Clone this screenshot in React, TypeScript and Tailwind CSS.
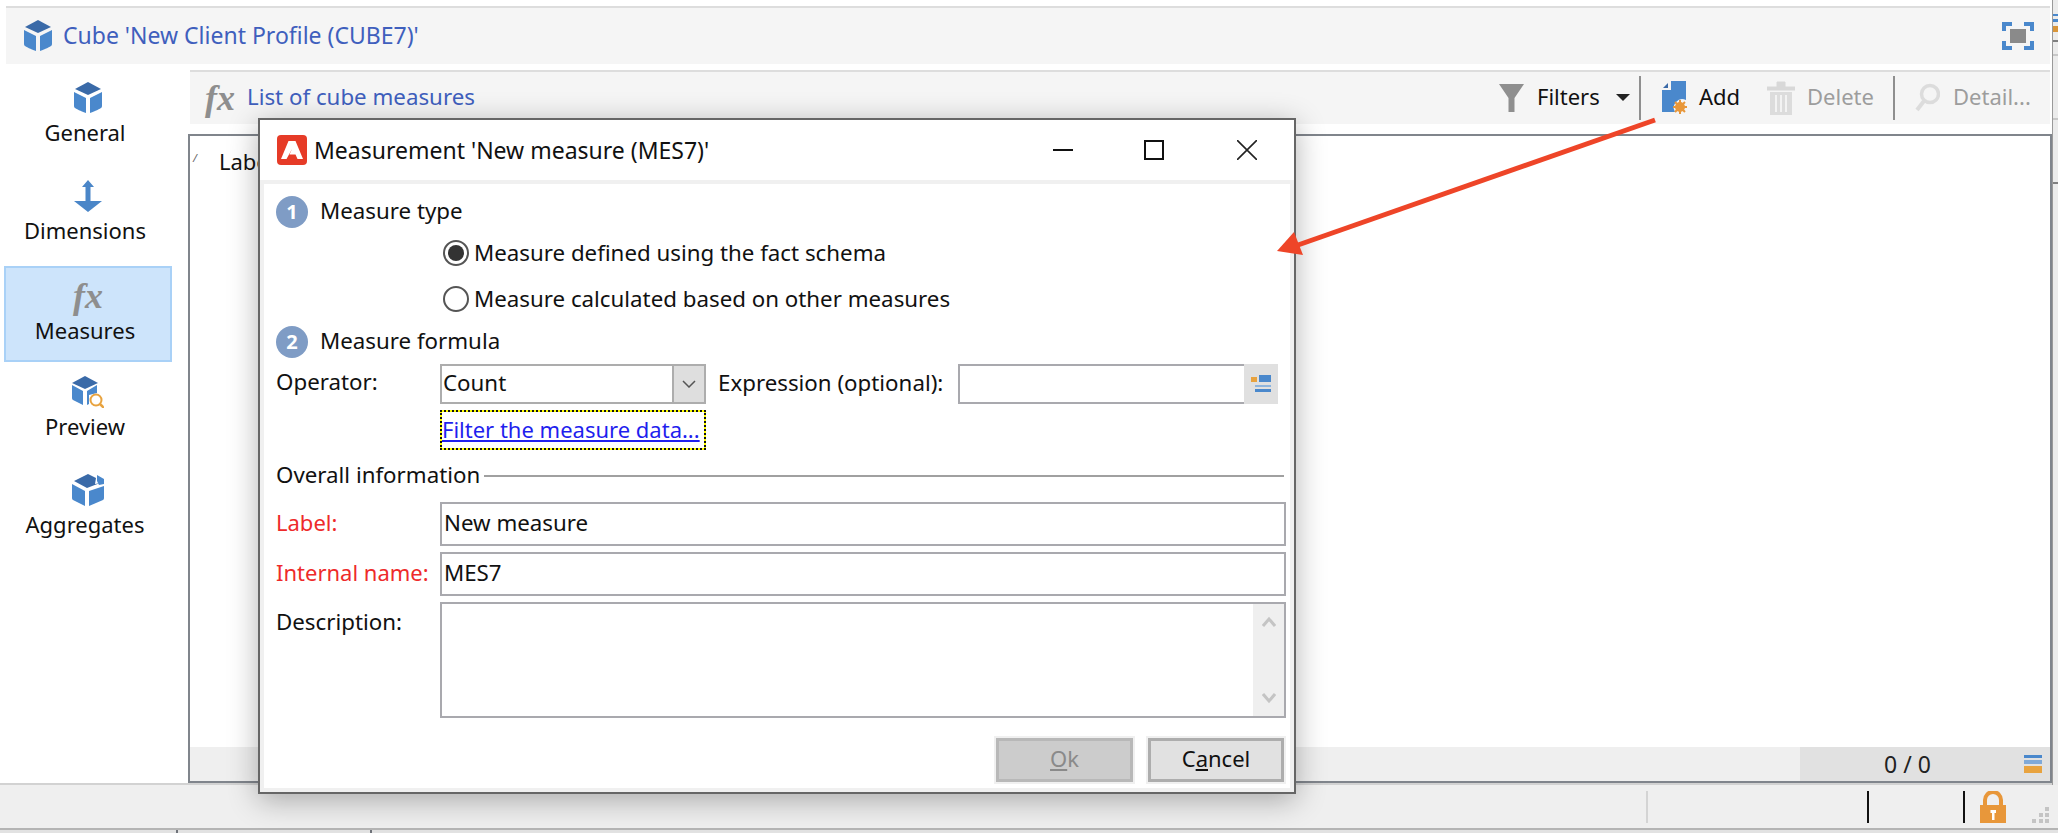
import React from 'react';

const ui = "font-['Noto_Sans','Open_Sans',sans-serif]";

const Cube = ({ className = '' }: { className?: string }) => (
  <svg viewBox="0 0 28 32" className={className}>
    <path d="M14 0 L27 7 L14 13 L1 7 Z" fill="#3a6aa8" />
    <path d="M0 10 L12 16 L12 31 C6 29 3 27 1 26 Q0 25.500 0 24 Z" fill="#4a88cc" />
    <path d="M28 10 L16 16 L16 31 C22 29 25 27 27 26 Q28 25.500 28 24 Z" fill="#4a88cc" />
  </svg>
);

const FxIcon = ({ className = '' }: { className?: string }) => (
  <span className={`font-['Liberation_Serif',serif] italic font-bold text-[#8e8e8e] leading-none ${className}`}>fx</span>
);

const DimensionsIcon = () => (
  <svg viewBox="0 0 28 32" className="w-[28px] h-[32px]">
    <path d="M14 0 L20 7 L16.500 7 L16.500 21 L28 21 L14 32 L0 21 L11.500 21 L11.500 7 L8 7 Z" fill="#4a86c8" />
  </svg>
);

const PreviewIcon = () => (
  <svg viewBox="0 0 32 32" className="w-[32px] h-[32px]">
    <path d="M13 0 L26 7 L13 13 L0 7 Z" fill="#3a6aa8" />
    <path d="M0 9 L11 15 L11 29 L1 24 Q0 23.500 0 22 Z" fill="#4a88cc" />
    <path d="M25 9 L15 15 L15 29 L17 28 L17 19 L25 17 Z" fill="#4a88cc" />
    <circle cx="24" cy="24" r="5.500" fill="#fff" stroke="#e8a33f" strokeWidth="2" />
    <path d="M28 28 L32 32" stroke="#e8a33f" strokeWidth="2.500" />
  </svg>
);

const AggregatesIcon = () => (
  <svg viewBox="0 0 32 32" className="w-[32px] h-[32px]">
    <path d="M16 0 L24 4 L23 10 L28 9 L15 14 L2 7 Z" fill="#3a6aa8" />
    <path d="M25 1 L32 5 L32 10 L27 11 L25 7 Z" fill="#4a88cc" />
    <path d="M0 10 L13 17 L13 32 L1 26 Q0 25.500 0 24 Z" fill="#4a88cc" />
    <path d="M32 12 L17 17 L17 32 L31 26 Q32 25.500 32 24 Z" fill="#4a88cc" />
  </svg>
);

const NavItem = ({ heightClass, icon, label, active }: { heightClass: string; icon: React.ReactNode; label: string; active?: boolean }) => (
  <div className={`${heightClass} w-[168px] ml-1 flex flex-col items-center ${active ? 'bg-[#cde4fb] border-2 border-[#a9d1f7] pt-[12px]' : 'pt-[14px]'}`}>
    <div className="h-[32px] flex items-center justify-center">{icon}</div>
    <div className="mt-[6px] h-[24px] leading-[24px] text-[22px] text-[#111] pr-[6px] whitespace-nowrap">{label}</div>
  </div>
);

const Sep = () => <div className="w-[2px] h-[44px] bg-[#8f8f8f]" />;

const Step = ({ n, label }: { n: number; label: string }) => (
  <div className="flex items-center h-[32px]">
    <div className="w-[32px] h-[32px] rounded-full bg-[#7f9cc5] text-white font-bold text-[20px] leading-[32px] text-center shrink-0">{n}</div>
    <div className="ml-[12px] pb-[2px] text-[22.300px] text-[#111]">{label}</div>
  </div>
);

const Radio = ({ checked, label }: { checked?: boolean; label: string }) => (
  <div className="flex items-center h-[26px]">
    <div className="w-[26px] h-[26px] rounded-full border-2 border-[#555] flex items-center justify-center shrink-0">
      {checked && <div className="w-[16px] h-[16px] rounded-full bg-[#333]" />}
    </div>
    <div className="ml-[5px] text-[22.300px] text-[#111] whitespace-nowrap">{label}</div>
  </div>
);

const Field = ({ label, value, red, className }: { label: string; value: string; red?: boolean; className: string }) => (
  <div className={`flex items-center ${className}`}>
    <div className={`w-[164px] pb-[3px] text-[22px] whitespace-nowrap ${red ? 'text-[#ee2a2a]' : 'text-[#111]'}`}>{label}</div>
    <div className="w-[846px] h-full border-2 border-[#a9a9ae] pl-[2px] pb-[3px] flex items-center text-[22.300px] text-[#111]">{value}</div>
  </div>
);

const MeasureDialog = () => (
  <div className="absolute left-[258px] top-[118px] w-[1038px] h-[676px] bg-white border-2 border-[#666] shadow-[0_6px_28px_rgba(0,0,0,0.3)] flex flex-col">
    {/* Title bar */}
    <div className="h-[60px] shrink-0 flex items-center pl-[17px] border-b-[4px] border-[#f0f0f0] box-content">
      <svg viewBox="0 0 30 30" className="w-[30px] h-[30px] shrink-0">
        <rect x="0" y="0" width="30" height="30" rx="4" fill="#e63b27" />
        <path d="M11.500 6 H18.500 L26 24 H20.500 L18.500 19.500 H12.500 L15 14 L9.500 24 H4 Z" fill="#fff" />
      </svg>
      <div className="ml-[7px] text-[23px] text-[#111] whitespace-nowrap">Measurement 'New measure (MES7)'</div>
      <div className="ml-auto flex items-center pr-[37px]">
        <div className="w-[20px] h-[2px] bg-[#111]" />
        <div className="ml-[71px] w-[20px] h-[20px] border-2 border-[#111]" />
        <svg viewBox="0 0 20 20" className="ml-[73px] w-[20px] h-[20px]">
          <path d="M0 0 L20 20 M20 0 L0 20" stroke="#222" strokeWidth="1.600" />
        </svg>
      </div>
    </div>

    {/* Body */}
    <div className="flex-1 border-x-[4px] border-b-[4px] border-[#f0f0f0] pl-[12px] pr-[4px] flex flex-col">
      <div className="mt-[12px]"><Step n={1} label="Measure type" /></div>
      <div className="mt-[12px] ml-[167px]"><Radio checked label="Measure defined using the fact schema" /></div>
      <div className="mt-[20px] ml-[167px]"><Radio label="Measure calculated based on other measures" /></div>
      <div className="mt-[14px]"><Step n={2} label="Measure formula" /></div>

      <div className="mt-[6px] flex items-center h-[40px]">
        <div className="w-[164px] text-[22.300px] text-[#111] pb-[4px]">Operator:</div>
        <div className="w-[266px] h-full border-2 border-[#adadad] flex items-center">
          <div className="flex-1 pl-[1px] pb-[2px] text-[22.300px] text-[#111]">Count</div>
          <div className="w-[32px] h-full bg-[#dedede] border-l-2 border-[#adadad] flex items-center justify-center">
            <svg viewBox="0 0 14 8" className="w-[14px] h-[8px]"><path d="M1 1 L7 7 L13 1" fill="none" stroke="#555" strokeWidth="1.500" /></svg>
          </div>
        </div>
        <div className="ml-[12px] pb-[2px] w-[240px] text-[22.300px] text-[#111] whitespace-nowrap">Expression (optional):</div>
        <div className="w-[286px] h-full border-2 border-[#a9a9ae] border-r-0" />
        <div className="w-[34px] h-full bg-[#e0e0e0] flex items-center justify-center">
          <svg viewBox="0 0 20 20" className="w-[20px] h-[20px]">
            <rect x="8" y="1" width="12" height="7" fill="#4a88cc" />
            <rect x="0" y="3" width="6" height="5" fill="#e8a33f" />
            <rect x="4" y="11" width="16" height="2" fill="#8db4dd" />
            <rect x="4" y="15" width="16" height="3" fill="#4a88cc" />
          </svg>
        </div>
      </div>

      <div className="mt-[6px] ml-[164px] w-[266px] h-[40px] border-2 border-[#ffff00] outline-2 outline-dotted outline-offset-[-2px] outline-[#111] pb-[1px] flex items-center text-[22px] text-[#1f1fee] underline whitespace-nowrap">
        Filter the measure data...
      </div>

      <div className="mt-[13px] pr-[2px] flex items-center h-[26px]">
        <div className="pb-[3px] text-[22.300px] text-[#111] whitespace-nowrap">Overall information</div>
        <div className="flex-1 h-[2px] bg-[#a0a0a0] ml-[4px]" />
      </div>

      <Field className="mt-[13px] h-[44px]" label="Label:" value="New measure" red />
      <Field className="mt-[6px] h-[44px]" label="Internal name:" value="MES7" red />

      <div className="mt-[6px] flex h-[116px]">
        <div className="w-[164px] text-[22.300px] text-[#111] pt-[3px]">Description:</div>
        <div className="w-[846px] h-full border-2 border-[#a9a9ae] flex justify-end">
          <div className="w-[31px] h-full bg-[#efefef] flex flex-col items-center justify-between py-[12px]">
            <svg viewBox="0 0 14 12" className="w-[14px] h-[12px]"><path d="M1 10 L7 3 L13 10" fill="none" stroke="#c4c4c4" strokeWidth="3" /></svg>
            <svg viewBox="0 0 14 12" className="w-[14px] h-[12px]"><path d="M1 2 L7 9 L13 2" fill="none" stroke="#c4c4c4" strokeWidth="3" /></svg>
          </div>
        </div>
      </div>

      <div className="mt-[20px] flex justify-end gap-[15px] pr-[2px]">
        <div className="w-[137px] h-[44px] pb-[3px] bg-[#cccccc] border-[3px] border-[#b8b8b8] outline-2 outline-[#f0f0f0] flex items-center justify-center text-[22px] text-[#8a8a8a]">
          <span><u>O</u>k</span>
        </div>
        <div className="w-[136px] h-[44px] pb-[3px] bg-[#e1e1e1] border-[3px] border-[#adadad] outline-2 outline-[#f0f0f0] flex items-center justify-center text-[22px] text-[#111]">
          <span>C<u>a</u>ncel</span>
        </div>
      </div>
    </div>
  </div>
);

const App = () => {
  return (
    <div className={`relative w-[2058px] h-[834px] overflow-hidden bg-white ${ui}`}>
      {/* Cube header */}
      <div className="h-[6px]" />
      <div className="ml-[6px] w-[2044px] h-[58px] border-t-2 border-[#dddddd] bg-[#f5f5f5] flex items-center pl-[18px] pr-[16px]">
        <Cube className="w-[28px] h-[32px] shrink-0" />
        <div className="ml-[11px] pb-[2px] text-[23px] text-[#3f5fbd] whitespace-nowrap">Cube 'New Client Profile (CUBE7)'</div>
        <svg viewBox="0 0 32 28" className="ml-auto w-[32px] h-[28px]">
          <path d="M2 9 V2 H10 M22 2 H30 V9 M30 19 V26 H22 M10 26 H2 V19" fill="none" stroke="#4a88cc" strokeWidth="4" />
          <rect x="8" y="7" width="16" height="14" fill="#8a8a8a" />
        </svg>
      </div>

      {/* Main area */}
      <div className="h-[721px] flex border-b-2 border-[#d2d2d2]">
        <div className="w-[188px] pt-[4px] shrink-0">
          <NavItem heightClass="h-[98px]" icon={<Cube className="w-[28px] h-[32px]" />} label="General" />
          <NavItem heightClass="h-[100px]" icon={<DimensionsIcon />} label="Dimensions" />
          <NavItem heightClass="h-[96px]" icon={<FxIcon className="text-[36px]" />} label="Measures" active />
          <NavItem heightClass="h-[98px]" icon={<PreviewIcon />} label="Preview" />
          <NavItem heightClass="h-[98px]" icon={<AggregatesIcon />} label="Aggregates" />
        </div>

        <div className="w-[1864px] pt-[6px] flex flex-col">
          <div className="ml-[2px] w-[1860px] h-[54px] border-t-2 border-[#dddddd] bg-[#f5f5f5] flex items-center pl-[15px]">
            <FxIcon className="text-[36px] w-[32px]" />
            <div className="ml-[10px] pb-[2px] text-[22.300px] text-[#3f5fbd] whitespace-nowrap">List of cube measures</div>
            <div className="ml-auto flex items-center text-[22px] whitespace-nowrap">
              <svg viewBox="0 0 25 28" className="w-[25px] h-[28px]">
                <path d="M0 0 H25 L15.500 14 V28 H9.500 V14 Z" fill="#8f8f8f" />
              </svg>
              <span className="ml-[13px] pb-[2px] w-[61px] text-[#111]">Filters</span>
              <svg viewBox="0 0 14 7" className="ml-[18px] w-[14px] h-[7px]"><path d="M0 0 H14 L7 7 Z" fill="#222" /></svg>
              <div className="ml-[9px]"><Sep /></div>
              <svg viewBox="0 0 26 34" className="ml-[21px] w-[26px] h-[34px]">
                <path d="M9 0 H24 V19 A8.500 8.500 0 0 0 13 31 H0 V9 H9 Z" fill="#4a88cc" />
                <path d="M6 2 V7 H1 Z" fill="#3a6aa8" />
                <circle cx="18" cy="26" r="5" fill="#e8973a" />
                <path d="M18 19 V33 M11 26 H25 M13 21 L23 31 M23 21 L13 31" stroke="#e8973a" strokeWidth="2" />
              </svg>
              <span className="ml-[11px] pb-[2px] w-[44px] text-[#111]">Add</span>
              <svg viewBox="0 0 28 34" className="ml-[24px] w-[28px] h-[34px]">
                <path d="M0 6 H28 V9 H0 Z M10 6 V1 H18 V6" fill="#d8d8d8" stroke="#d8d8d8" />
                <path d="M3 11 H25 V34 H3 Z" fill="#dcdcdc" />
                <path d="M9 14 V31 M14 14 V31 M19 14 V31" stroke="#f3f3f3" strokeWidth="2" />
              </svg>
              <span className="ml-[12px] pb-[2px] w-[65px] text-[#9d9d9d]">Delete</span>
              <div className="ml-[21px]"><Sep /></div>
              <svg viewBox="0 0 25 30" className="ml-[20px] w-[25px] h-[30px]">
                <circle cx="15" cy="11" r="8.500" fill="none" stroke="#dcdcdc" strokeWidth="3.500" />
                <path d="M9 18 L2 27" stroke="#dcdcdc" strokeWidth="4" />
              </svg>
              <span className="ml-[13px] pb-[2px] w-[80px] text-[#9d9d9d]">Detail...</span>
              <div className="w-[17px]" />
            </div>
          </div>

          <div className="mt-[10px] w-[1864px] h-[650px] border-2 border-[#80858c] flex flex-col">
            <div className="flex-1 flex items-start pl-[3px] pt-[9px] text-[22px] text-[#111]">
              <span className="text-[11px] text-[#666] italic mt-[5px]">/</span>
              <span className="ml-[22px]">Label</span>
            </div>
            <div className="h-[34px] bg-[#efefef] flex justify-end">
              <div className="w-[250px] h-full bg-[#e1e1e1] flex items-center pl-[84px] pr-[8px] text-[23px] text-[#222]">
                <span>0 / 0</span>
                <svg viewBox="0 0 18 18" className="ml-auto w-[18px] h-[18px]">
                  <rect x="0" y="0" width="18" height="3" fill="#4a88cc" />
                  <rect x="0" y="5" width="18" height="4" fill="#7fa9d8" />
                  <rect x="0" y="11" width="18" height="7" fill="#e8a33f" />
                </svg>
              </div>
            </div>
          </div>
        </div>
      </div>

      {/* Status bar */}
      <div className="h-[43px] bg-[#efefef] flex items-center relative">
        <div className="ml-[1646px] w-[2px] h-[32px] bg-[#d4d4d4]" />
        <div className="ml-[219px] w-[2px] h-[32px] bg-[#111]" />
        <div className="ml-[94px] w-[2px] h-[32px] bg-[#111]" />
        <svg viewBox="0 0 26 32" className="ml-[15px] w-[26px] h-[32px]">
          <path d="M5 15 V9 A8 8 0 0 1 21 9 V15" fill="none" stroke="#e8973a" strokeWidth="4" />
          <rect x="0" y="14" width="26" height="18" fill="#e8973a" />
          <rect x="12" y="20" width="2.500" height="9" fill="#fff" />
          <rect x="10.500" y="19" width="5.500" height="3" fill="#fff" />
        </svg>
        <svg viewBox="0 0 18 16" className="ml-[26px] mt-[16px] w-[18px] h-[16px]">
          <path d="M13 0 h4 v4 h-4 Z M7 6 h4 v4 h-4 Z M13 6 h4 v4 h-4 Z M0 12 h4 v4 h-4 Z M7 12 h4 v4 h-4 Z M13 12 h4 v4 h-4 Z" fill="#c4c4c4" />
        </svg>
      </div>

      {/* Bottom strip */}
      <div className="h-[5px] border-t-2 border-[#b4b4b4] bg-[#e2e2e2] flex">
        <div className="ml-[176px] w-[2px] h-full bg-[#6f737a]" />
        <div className="ml-[192px] w-[2px] h-full bg-[#6f737a]" />
      </div>

      {/* Window behind, peeking out on the right edge */}
      <div className="absolute left-[2052px] top-0 w-[6px] h-[785px] border-l border-[#9a9a9a] bg-[#ececec] flex flex-col">
        <div className="mt-[14px] h-[2px] bg-[#4a88cc]" />
        <div className="mt-[3px] h-[3px] bg-[#4a88cc]" />
        <div className="mt-[4px] h-[6px] bg-[#d9963a]" />
        <div className="mt-[8px] h-[2px] bg-[#808080]" />
        <div className="mt-[12px] h-[2px] bg-[#c8c8c8]" />
        <div className="mt-[62px] h-[2px] bg-[#c8c8c8]" />
        <div className="mt-[62px] h-[2px] bg-[#808080]" />
      </div>

      <MeasureDialog />

      {/* Callout arrow */}
      <svg className="absolute left-0 top-0 w-[2058px] h-[834px] pointer-events-none" viewBox="0 0 2058 834">
        <path d="M1655 120 L1298 245" stroke="#ee4528" strokeWidth="5" />
        <path d="M1277 251 L1294 232 L1303 255 Z" fill="#ee4528" />
      </svg>
    </div>
  );
};

export default App;
